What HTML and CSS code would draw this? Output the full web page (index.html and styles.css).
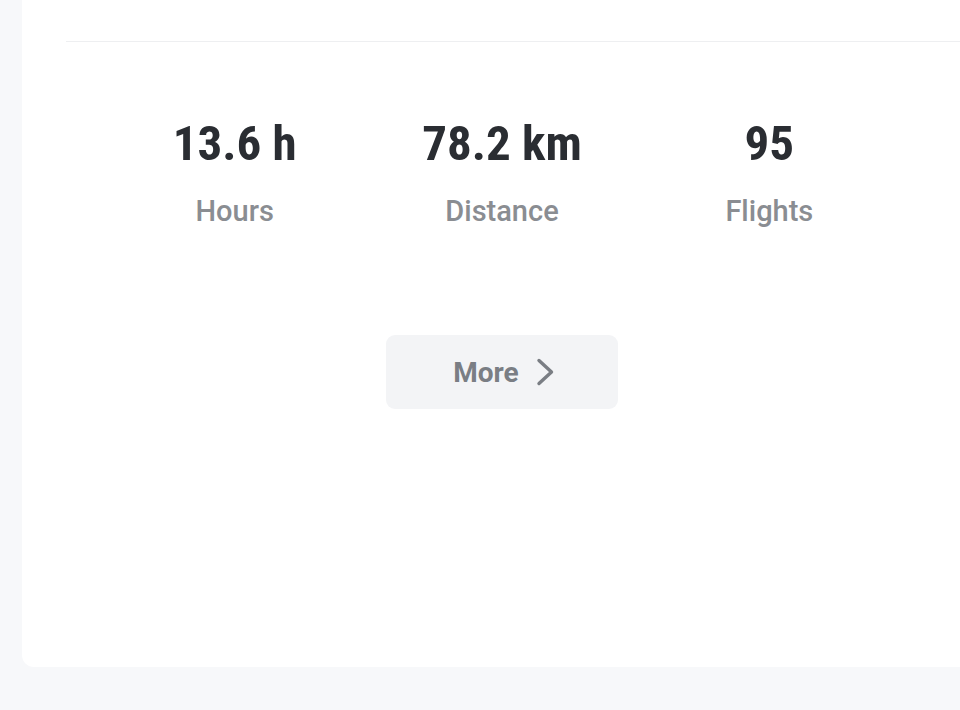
FILE: index.html
```html
<!DOCTYPE html>
<html lang="en">
<head>
<meta charset="utf-8">
<title>Stats</title>
<link rel="stylesheet" href="styles.css">
</head>
<body>
<main class="card">
  <div class="card-top"></div>
  <hr class="divider">
  <section class="stats">
    <div class="stat">
      <div class="stat-value">13.6 h</div>
      <div class="stat-label">Hours</div>
    </div>
    <div class="stat">
      <div class="stat-value">78.2 km</div>
      <div class="stat-label">Distance</div>
    </div>
    <div class="stat">
      <div class="stat-value">95</div>
      <div class="stat-label">Flights</div>
    </div>
  </section>
  <div class="actions">
    <button class="more-btn" type="button">
      <span>More</span>
      <svg class="chev" width="19" height="28" viewBox="0 0 19 28" aria-hidden="true">
        <polyline points="3,2.5 15.5,14 3,25.5" fill="none" stroke="currentColor" stroke-width="3.4" stroke-linecap="round" stroke-linejoin="round"/>
      </svg>
    </button>
  </div>
</main>
</body>
</html>
```
FILE: styles.css
```css
html, body {
  margin: 0;
  padding: 0;
  overflow: hidden;
  height: 100%;
}
body {
  background: #f7f8fa;
  font-family: Roboto, "Liberation Sans", sans-serif;
}
.card {
  margin-left: 22px;
  width: 980px;
  background: #ffffff;
  border-radius: 0 0 12px 12px;
  padding: 0 0 258px 44px;
  box-sizing: border-box;
}
.card-top {
  height: 41px;
}
.divider {
  margin: 0;
  border: 0;
  height: 1px;
  background: #eeeff1;
}
.stats {
  display: grid;
  grid-template-columns: repeat(3, 1fr);
  padding: 72px 0 0 35px;
  width: 837px;
  box-sizing: border-box;
}
.stat {
  display: flex;
  flex-direction: column;
  align-items: center;
  gap: 19px;
}
.stat-value {
  font-size: 49px;
  line-height: 60px;
  font-weight: 700;
  font-stretch: condensed;
  color: #2a2d32;
}
.stat-label {
  font-size: 29px;
  line-height: 36px;
  font-weight: 500;
  color: #8a8d92;
}
.actions {
  display: flex;
  justify-content: center;
  padding-top: 106px;
  width: 872px;
}
.more-btn {
  width: 232px;
  height: 74px;
  border: 0;
  border-radius: 9px;
  background: #f3f4f6;
  display: flex;
  align-items: center;
  justify-content: center;
  gap: 17px;
  font-family: Roboto, "Liberation Sans", sans-serif;
  font-size: 28px;
  font-weight: 700;
  color: #7a7e84;
  padding: 0 0 0 4px;
}
.chev {
  display: block;
}
```
